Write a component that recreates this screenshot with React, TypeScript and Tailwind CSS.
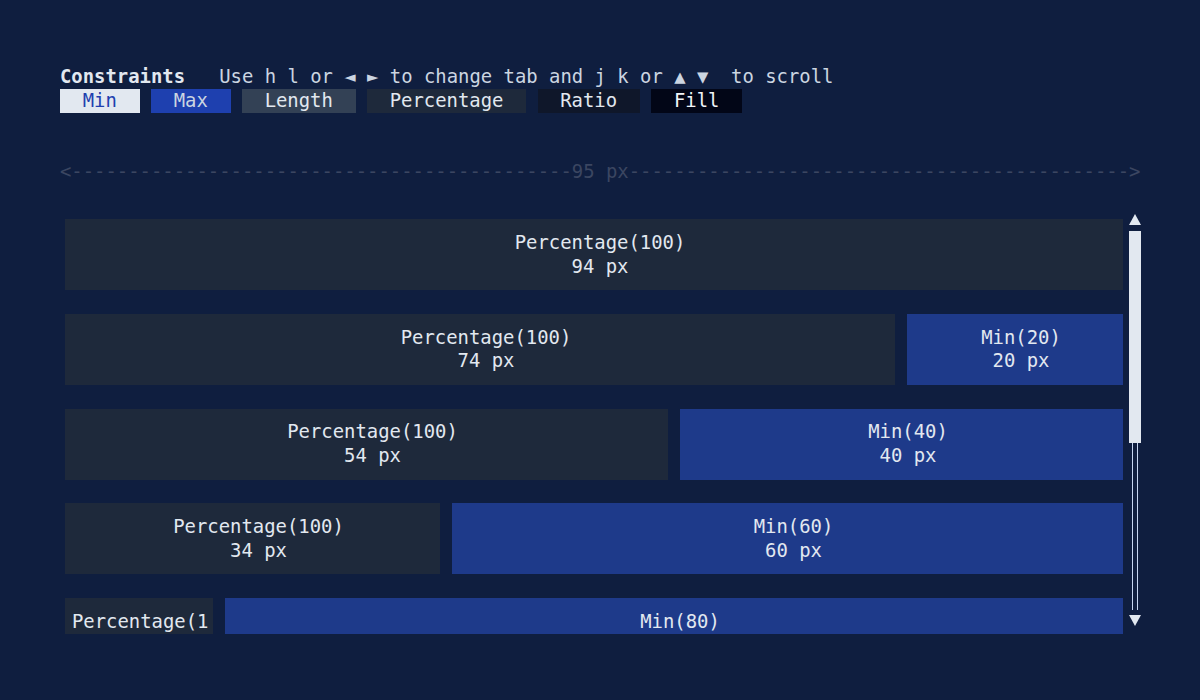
import React from "react";

type Segment = {
  width: number;
  kind: "gray" | "blue";
  lines: string[];
  align?: "left";
};

const tabs = [
  { label: "Min", cls: "w-[79.6px] bg-[#e2e8f0] text-[#1e40af]" },
  { label: "Max", cls: "w-[79.6px] bg-[#1e40af] text-[#cbd5e1]" },
  { label: "Length", cls: "w-[113.7px] bg-[#334155] text-[#e2e8f0]" },
  { label: "Percentage", cls: "w-[159.2px] bg-[#1e293b] text-[#e2e8f0]" },
  { label: "Ratio", cls: "w-[102.4px] bg-[#0f172a] text-[#e2e8f0]" },
  { label: "Fill", cls: "w-[91px] bg-[#020617] text-[#f1f5f9]" },
];

const bars: Segment[][] = [
  [{ width: 1058, kind: "gray", lines: ["Percentage(100)", "94 px"] }],
  [
    { width: 830, kind: "gray", lines: ["Percentage(100)", "74 px"] },
    { width: 216, kind: "blue", lines: ["Min(20)", "20 px"] },
  ],
  [
    { width: 603, kind: "gray", lines: ["Percentage(100)", "54 px"] },
    { width: 444, kind: "blue", lines: ["Min(40)", "40 px"] },
  ],
  [
    { width: 375, kind: "gray", lines: ["Percentage(100)", "34 px"] },
    { width: 671, kind: "blue", lines: ["Min(60)", "60 px"] },
  ],
  // last row is cut off by the scroll view
  [
    { width: 148, kind: "gray", lines: ["Percentage(1", ""], align: "left" },
    { width: 898, kind: "blue", lines: ["Min(80)", ""] },
  ],
];

function Bar({ segments }: { segments: Segment[] }) {
  return (
    <div className="flex h-[71px] shrink-0 gap-[12px]">
      {segments.map((s, i) => (
        <div
          key={i}
          style={{ width: s.width }}
          className={`flex h-full shrink-0 flex-col justify-center overflow-hidden whitespace-nowrap text-[#e2e8f0] ${
            s.kind === "gray" ? "bg-[#1e293b]" : "bg-[#1e3a8a]"
          } ${s.align === "left" ? "items-start pl-[7px]" : "items-center pl-[12px]"}`}
        >
          {s.lines.map((l, j) => (
            <div key={j} className="h-[23.75px] leading-[23.75px]">
              {l}
            </div>
          ))}
        </div>
      ))}
    </div>
  );
}

function Scrollbar() {
  return (
    <div className="flex w-[12px] shrink-0 flex-col">
      <div className="flex h-[24px] items-end justify-center pb-[6px]">
        <svg width="12" height="11" viewBox="0 0 12 11">
          <polygon points="6,0 12,11 0,11" fill="#e2e8f0" />
        </svg>
      </div>
      <div className="h-[212px] bg-[#e2e8f0]" />
      <div className="flex h-[167px] justify-center gap-[3.5px]">
        <div className="w-[1.5px] bg-[#c7d6f2]" />
        <div className="w-[1.5px] bg-[#c7d6f2]" />
      </div>
      <div className="flex h-[24.5px] items-start justify-center pt-[5px]">
        <svg width="12" height="11" viewBox="0 0 12 11">
          <polygon points="0,0 12,0 6,11" fill="#e2e8f0" />
        </svg>
      </div>
    </div>
  );
}

export default function App() {
  const dashes = "-".repeat(44);

  return (
    <div
      className="h-[700px] w-[1200px] overflow-hidden bg-[#0f1e3f] pl-[60px] pt-[65px] text-[18.9px]"
      style={{ fontFamily: '"DejaVu Sans Mono", "Liberation Mono", monospace' }}
    >
      <div className="flex w-[1080px] flex-col">
        {/* header */}
        <div className="h-[23.75px] whitespace-pre leading-[23.75px]">
          <span className="font-bold text-[#e2e8f0]">Constraints</span>
          <span className="text-[#cbd5e1]">
            {"   Use h l or ◄ ► to change tab and j k or ▲ ▼  to scroll"}
          </span>
        </div>

        {/* tabs */}
        <div className="flex h-[23.75px] gap-[11.37px] leading-[23.75px]">
          {tabs.map((t) => (
            <div key={t.label} className={`text-center ${t.cls}`}>
              {t.label}
            </div>
          ))}
        </div>

        {/* width ruler */}
        <div className="mt-[47.5px] h-[23.75px] whitespace-pre leading-[23.75px] text-[#3b4661]">
          {"<" + dashes + "95 px" + dashes + ">"}
        </div>

        {/* bars + scrollbar */}
        <div className="mt-[22.75px] flex h-[427.5px] gap-[6px] pl-[5px]">
          <div className="flex w-[1058px] shrink-0 flex-col gap-[23.75px] overflow-hidden pt-[12.5px]">
            {bars.map((b, i) => (
              <Bar key={i} segments={b} />
            ))}
          </div>
          <Scrollbar />
        </div>
      </div>
    </div>
  );
}
